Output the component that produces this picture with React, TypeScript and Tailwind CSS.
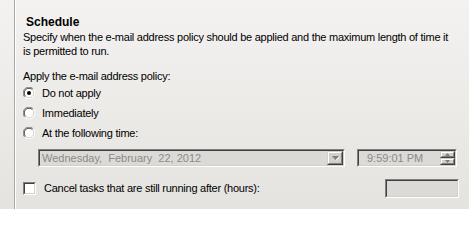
import React from "react";

function Radio({ checked }: { checked?: boolean }) {
  return (
    <svg width="12" height="12" viewBox="0 0 12 12" className="shrink-0">
      <circle cx="6" cy="6" r="5.5" fill="#ffffff" />
      <path d="M10.2 1.8 A5.5 5.5 0 0 0 1.8 10.2" fill="none" stroke="#808080" strokeWidth="1" />
      <path d="M9.4 2.6 A4.4 4.4 0 0 0 2.6 9.4" fill="none" stroke="#404040" strokeWidth="1" />
      <path d="M1.8 10.2 A5.5 5.5 0 0 0 10.2 1.8" fill="none" stroke="#ffffff" strokeWidth="1" />
      <path d="M2.6 9.4 A4.4 4.4 0 0 0 9.4 2.6" fill="none" stroke="#d4d0c8" strokeWidth="1" />
      {checked && <circle cx="6" cy="6" r="2" fill="#000000" />}
    </svg>
  );
}

function Sunken({ className, children }: { className?: string; children?: React.ReactNode }) {
  return (
    <div className={"border border-t-[#808080] border-l-[#808080] border-b-white border-r-white " + (className ?? "")}>
      <div className="h-full w-full border border-t-[#404040] border-l-[#404040] border-b-[#d4d0c8] border-r-[#d4d0c8] flex items-center">
        {children}
      </div>
    </div>
  );
}

function Raised({ className, children }: { className?: string; children?: React.ReactNode }) {
  return (
    <div className={"border border-t-[#d4d0c8] border-l-[#d4d0c8] border-b-[#404040] border-r-[#404040] bg-[#d4d0c8] " + (className ?? "")}>
      <div className="h-full w-full border border-t-white border-l-white border-b-[#808080] border-r-[#808080] flex items-center justify-center">
        {children}
      </div>
    </div>
  );
}

export default function App() {
  const font = { fontFamily: '"Liberation Sans", Arial, sans-serif' };
  return (
    <div
      className="relative w-[469px] h-[209px] overflow-hidden bg-gradient-to-b from-[#f4f2f1] via-[#edebe8] to-[#e5e3e0] text-[11px] tracking-[-0.25px] text-black whitespace-nowrap"
      style={font}
    >
      <div className="ml-[14px] h-full border-l border-[#a8a8a8]">
        <div className="h-full border-l border-white pl-[7px] pt-[15px]">
          <div className="ml-[3px] h-[14px] leading-[14px] text-[12px] font-bold tracking-normal">Schedule</div>
          <div className="mt-[1px] leading-[14px]">
            <div className="h-[14px]">Specify when the e-mail address policy should be applied and the maximum length of time it</div>
            <div className="h-[14px]">is permitted to run.</div>
          </div>
          <div className="mt-[11px] h-[14px] leading-[14px]">Apply the e-mail address policy:</div>
          <div className="flex flex-col">
            <div className="flex h-[20px] items-center gap-[7px]">
              <Radio checked />
              <span>Do not apply</span>
            </div>
            <div className="flex h-[20px] items-center gap-[7px]">
              <Radio />
              <span>Immediately</span>
            </div>
            <div className="flex h-[20px] items-center gap-[7px]">
              <Radio />
              <span>At the following time:</span>
            </div>
          </div>
          <div className="mt-[6px] ml-[15px] flex h-[18px] gap-[12px]">
            <Sunken className="w-[307px] h-[18px] bg-[#dcdad6]">
              <span className="ml-[2px] flex-1 text-[#8a8a8a] whitespace-pre tracking-normal">Wednesday,  February  22, 2012</span>
              <Raised className="w-[16px] h-full">
                <svg width="7" height="5" viewBox="0 0 7 5">
                  <path d="M0 0 H7 L3.5 4 Z" fill="#808080" />
                  <path d="M4 4.5 L7 1" stroke="#ffffff" strokeWidth="1" />
                </svg>
              </Raised>
            </Sunken>
            <Sunken className="w-[100px] h-[18px] bg-[#dcdad6]">
              <span className="ml-[8px] flex-1 text-[#8a8a8a] tracking-normal">9:59:01 PM</span>
              <div className="flex flex-col h-full w-[15px]">
                <Raised className="w-full h-1/2">
                  <svg width="5" height="3" viewBox="0 0 5 3">
                    <path d="M0 3 H5 L2.5 0 Z" fill="#808080" />
                  </svg>
                </Raised>
                <Raised className="w-full h-1/2">
                  <svg width="5" height="3" viewBox="0 0 5 3">
                    <path d="M0 0 H5 L2.5 3 Z" fill="#808080" />
                  </svg>
                </Raised>
              </div>
            </Sunken>
          </div>
          <div className="mt-[12px] flex h-[19px] items-center">
            <Sunken className="w-[13px] h-[13px] bg-white" />
            <span className="ml-[8px] flex-1">Cancel tasks that are still running after (hours):</span>
            <Sunken className="w-[74px] h-[19px] bg-[#dcdad6] mr-[10px]" />
          </div>
        </div>
      </div>
    </div>
  );
}
